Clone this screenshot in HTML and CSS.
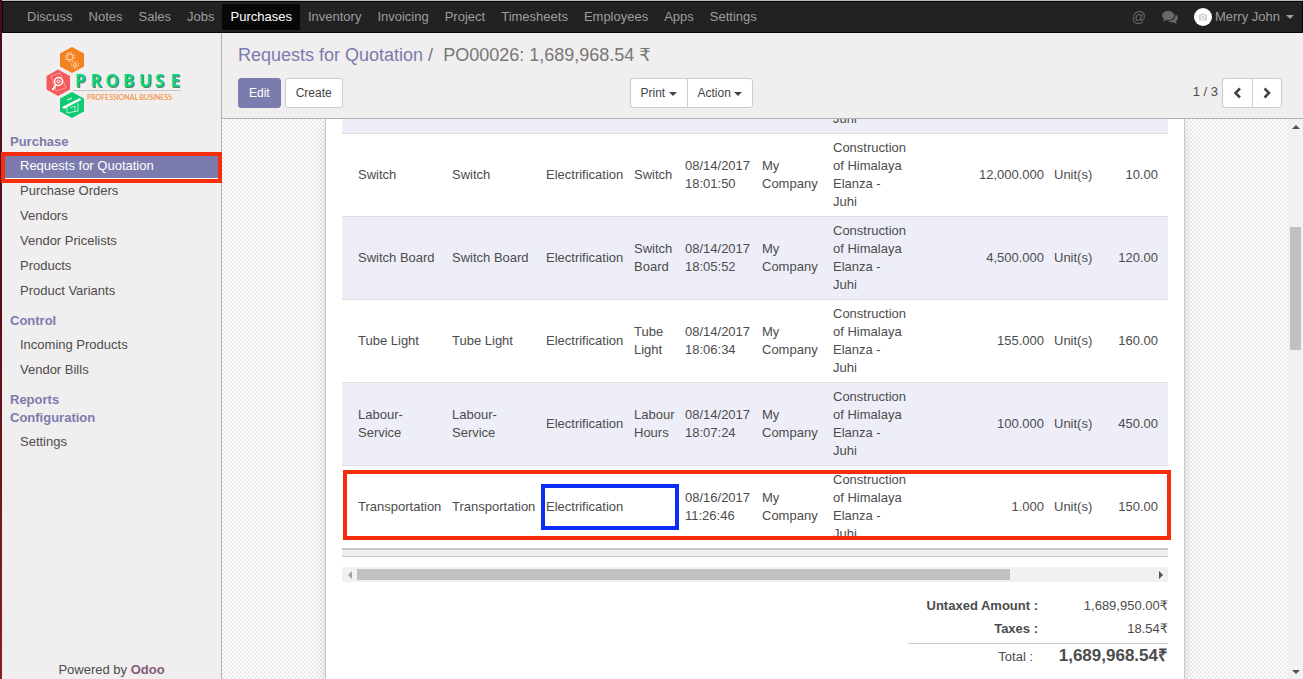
FILE: index.html
```html
<!DOCTYPE html>
<html lang="en">
<head>
<meta charset="utf-8">
<title>PO00026 - Odoo</title>
<link rel="stylesheet" href="styles.css">
</head>
<body>
<div class="desktop-edge"></div>
<div class="app">
  <nav class="topbar">
    <ul class="menu">
      <li><a href="#">Discuss</a></li>
      <li><a href="#">Notes</a></li>
      <li><a href="#">Sales</a></li>
      <li><a href="#">Jobs</a></li>
      <li><a href="#" class="active">Purchases</a></li>
      <li><a href="#">Inventory</a></li>
      <li><a href="#">Invoicing</a></li>
      <li><a href="#">Project</a></li>
      <li><a href="#">Timesheets</a></li>
      <li><a href="#">Employees</a></li>
      <li><a href="#">Apps</a></li>
      <li><a href="#">Settings</a></li>
    </ul>
    <div class="systray">
      <a href="#" class="tray-icon" aria-label="Mentions">@</a>
      <a href="#" class="tray-icon" aria-label="Messages">
        <svg width="16" height="13" viewBox="0 0 16 13" fill="currentColor"><path d="M6.200 0C9.600 0 12.300 2 12.300 4.600S9.600 9.100 6.200 9.100c-.6 0-1.200 0-1.700-.2C3.500 9.700 2.200 10.200.9 10.400c.7-.7 1.200-1.400 1.300-2.300C.9 7.200 0 6 0 4.600 0 2 2.800 0 6.200 0z"/><path d="M13.200 3.300C14.900 4.100 16 5.400 16 6.900c0 1.400-.8 2.600-2.200 3.400.1.900.6 1.700 1.300 2.400-1.400-.2-2.600-.7-3.600-1.500-2.200.4-4.400 0-5.900-1.100 4.300 0 7.800-2.300 7.800-5.500 0-.5 0-.9-.2-1.300z"/></svg>
      </a>
      <a href="#" class="user">
        <svg width="18" height="18" viewBox="0 0 18 18"><circle cx="9" cy="9" r="9" fill="#fff"/><path d="M5 6.500h2l.8-.9h2.400l.8.9h2v6H5z" fill="#cfcfcf"/><circle cx="9" cy="9.300" r="2" fill="none" stroke="#fff"/></svg>
        <span>Merry John</span>
        <i class="caret"></i>
      </a>
    </div>
  </nav>
  <div class="main">
    <aside class="sidebar">
      <a href="#" class="logo" aria-label="Probuse Professional Business">
        <svg width="160" height="85" viewBox="0 0 160 85">
          <path d="M42 7l12 6.500v13L42 33l-12-6.500v-13z" fill="#f58220"/>
          <path d="M28 29.500l12 6.500v13.500L28 56l-11.500-6.500V36z" fill="#f55a5a"/>
          <path d="M42 52l12 6.500v13L42 78l-12-6.500v-13z" fill="#0dcb73"/>
          <g fill="none" stroke="#fde3cc">
            <circle cx="40" cy="17" r="3"/><circle cx="40" cy="17" r="4.500" stroke-dasharray="1.800 1.730"/>
            <circle cx="45" cy="25" r="1.500"/><circle cx="45" cy="25" r="3.500" stroke-dasharray="1.400 1.340"/>
          </g>
          <path d="M21 36l9-3 6 15-10 3z" fill="none" stroke="#fa9c9c"/>
          <circle cx="28.500" cy="41.500" r="4" fill="#f55a5a" stroke="#fff" stroke-width="1.500"/>
          <path d="M26 45l-3.500 5" stroke="#fff" stroke-width="2"/><circle cx="28.500" cy="41.500" r="1.500" fill="none" stroke="#fff"/>
          <path d="M37 65v8l11-2V63M40 68l5-2v6" fill="none" stroke="#b6f0d3"/>
          <path d="M32 67l18-9 1 2-17 9z" fill="#fff"/>
          <path d="M37 60l5-2" stroke="#fff"/>
          <text class="logo-name" x="45 60.500 75.500 93 109 125 140.500" y="47">PROBUSE</text>
          <path d="M43 50.500h108" stroke="#c9c5c7"/>
          <text class="logo-tag" x="57" y="60">PROFESSIONAL BUSINESS</text>
        </svg>
      </a>
      <div class="sections">
        <h2>Purchase</h2>
        <ul>
          <li class="selected"><a href="#">Requests for Quotation</a></li>
          <li><a href="#">Purchase Orders</a></li>
          <li><a href="#">Vendors</a></li>
          <li><a href="#">Vendor Pricelists</a></li>
          <li><a href="#">Products</a></li>
          <li><a href="#">Product Variants</a></li>
        </ul>
        <h2>Control</h2>
        <ul>
          <li><a href="#">Incoming Products</a></li>
          <li><a href="#">Vendor Bills</a></li>
        </ul>
        <h2>Reports</h2>
        <h2>Configuration</h2>
        <ul>
          <li><a href="#">Settings</a></li>
        </ul>
      </div>
      <footer class="powered">Powered by <a href="#">Odoo</a></footer>
    </aside>
    <div class="content">
      <header class="control-panel">
        <h1 class="breadcrumb"><a href="#">Requests for Quotation</a><span class="slash">/</span><span>PO00026: 1,689,968.54 <span class="cur">₹</span></span></h1>
        <div class="toolbar">
          <div class="tools-left">
            <button class="btn primary">Edit</button>
            <button class="btn">Create</button>
          </div>
          <div class="tools-right">
            <div class="group">
              <button class="btn">Print <i class="caret"></i></button>
              <button class="btn">Action <i class="caret"></i></button>
            </div>
            <div class="pager">
              <span>1 / 3</span>
              <div class="group">
                <button class="btn" aria-label="Previous"><svg width="10" height="12" viewBox="0 0 10 12"><path d="M8 1.500L3.500 6 8 10.500" fill="none" stroke="#444" stroke-width="2.600"/></svg></button>
                <button class="btn" aria-label="Next"><svg width="10" height="12" viewBox="0 0 10 12"><path d="M2.500 1.500L7 6 2.500 10.500" fill="none" stroke="#444" stroke-width="2.600"/></svg></button>
              </div>
            </div>
          </div>
        </div>
      </header>
      <div class="viewport">
        <div class="canvas">
          <section class="sheet">
            <div class="lines">
              <table>
                <colgroup><col class="c-product"><col class="c-desc"><col class="c-account"><col class="c-tag"><col class="c-date"><col class="c-company"><col class="c-project"><col><col class="c-unit"><col class="c-price"></colgroup>
                <tbody>
                  <tr><td></td><td></td><td></td><td></td><td></td><td></td><td>Juhi</td><td></td><td></td><td></td></tr>
                  <tr><td>Switch</td><td>Switch</td><td>Electrification</td><td>Switch</td><td>08/14/2017 18:01:50</td><td>My Company</td><td>Construction<br>of Himalaya<br>Elanza -<br>Juhi</td><td class="num">12,000.000</td><td>Unit(s)</td><td class="num">10.00</td></tr>
                  <tr><td>Switch Board</td><td>Switch Board</td><td>Electrification</td><td>Switch Board</td><td>08/14/2017 18:05:52</td><td>My Company</td><td>Construction<br>of Himalaya<br>Elanza -<br>Juhi</td><td class="num">4,500.000</td><td>Unit(s)</td><td class="num">120.00</td></tr>
                  <tr><td>Tube Light</td><td>Tube Light</td><td>Electrification</td><td>Tube Light</td><td>08/14/2017 18:06:34</td><td>My Company</td><td>Construction<br>of Himalaya<br>Elanza -<br>Juhi</td><td class="num">155.000</td><td>Unit(s)</td><td class="num">160.00</td></tr>
                  <tr><td>Labour-<br>Service</td><td>Labour-<br>Service</td><td>Electrification</td><td>Labour Hours</td><td>08/14/2017 18:07:24</td><td>My Company</td><td>Construction<br>of Himalaya<br>Elanza -<br>Juhi</td><td class="num">100.000</td><td>Unit(s)</td><td class="num">450.00</td></tr>
                  <tr><td>Transportation</td><td>Transportation</td><td>Electrification</td><td></td><td>08/16/2017 11:26:46</td><td>My Company</td><td>Construction<br>of Himalaya<br>Elanza -<br>Juhi</td><td class="num">1.000</td><td>Unit(s)</td><td class="num">150.00</td></tr>
                </tbody>
              </table>
              <div class="mark mark-row"></div>
              <div class="mark mark-cell"></div>
            </div>
            <div class="table-foot"></div>
            <div class="hscroll"><i class="arrow left"></i><div class="track"><div class="thumb"></div></div><i class="arrow right"></i></div>
            <dl class="totals">
              <div><dt>Untaxed Amount :</dt><dd>1,689,950.00<span class="cur">₹</span></dd></div>
              <div><dt>Taxes :</dt><dd>18.54<span class="cur">₹</span></dd></div>
              <div class="grand"><dt>Total :</dt><dd>1,689,968.54₹</dd></div>
            </dl>
          </section>
        </div>
        <div class="vscroll"><i class="arrow up"></i><div class="track"><div class="thumb"></div></div><i class="arrow down"></i></div>
      </div>
    </div>
  </div>
</div>
</body>
</html>
```

FILE: styles.css
```css
* { box-sizing: border-box; }
body {
  margin: 0;
  height: 100vh;
  display: flex;
  overflow: hidden;
  font: 13px/18px "Liberation Sans", Arial, sans-serif;
  color: #4c4c4c;
  background: #f0eeee;
}
a { color: inherit; text-decoration: none; }
ul { list-style: none; margin: 0; padding: 0; }
h1, h2, dl, dd { margin: 0; }
.cur { font-family: "DejaVu Sans", sans-serif; line-height: 1; }

.desktop-edge {
  flex: none;
  width: 2px;
  background: linear-gradient(#4a0d18, #5c1019 50%, #8c1c1c);
}
.app { flex: 1; min-width: 0; display: flex; flex-direction: column; border-top: 1px solid #b8bab8; }

.topbar {
  flex: none;
  height: 32px;
  display: flex;
  justify-content: space-between;
  background: #222;
  border: 1px solid #060606;
  color: #9d9d9d;
}
.menu { display: flex; padding-left: 16px; }
.menu a { display: block; padding: 6px 8px; }
.menu .active { background: #080808; color: #fff; margin-top: 2px; padding: 4px 8px; }
.systray { display: flex; align-items: center; gap: 16px; padding-right: 8px; }
.tray-icon { display: flex; color: #686868; font-size: 14px; }
.user { display: flex; align-items: center; gap: 3px; }
.caret {
  display: inline-block;
  border: 4px solid transparent;
  border-top-color: currentColor;
  border-bottom: 0;
  vertical-align: middle;
}
.user .caret { margin-left: 3px; }

.main { flex: 1; min-height: 0; display: flex; }
.sidebar {
  flex: none;
  width: 220px;
  display: flex;
  flex-direction: column;
  border-right: 1px solid #afafb6;
}
.logo { display: block; padding: 7px 28px 0; height: 100px; }
.logo svg { display: block; }
.logo-name { font: bold 17px "Open Sans", sans-serif; fill: #0fd67c; text-shadow: 1px 1px #5e7a6c; }
.logo-tag { font: 7px Lato, sans-serif; fill: #f58220; }
.sections { flex: 1; }
.sections h2 { font-size: 13px; line-height: 18px; color: #7c7bad; padding-left: 8px; }
.sections ul { padding: 3px 0 8px; }
.sections li { height: 25px; padding: 3px 18px 4px; }
.sections .selected {
  position: relative;
  background: #7c7bad;
  color: #fff;
  border-bottom: 1px solid #fff;
}
.selected::after {
  content: "";
  position: absolute;
  inset: -2px -1px -5px -1px;
  border: 4px solid #f62e0b;
}
.powered { text-align: center; }
.powered a { font-weight: bold; color: #875a7b; }

.content { flex: 1; min-width: 0; display: flex; flex-direction: column; }
.control-panel { flex: none; height: 86px; padding: 10px 21px 0 16px; border-bottom: 1px solid #afafb6; }
.breadcrumb { font-size: 18px; line-height: 24px; font-weight: normal; color: #777; }
.breadcrumb a { color: #7c7bad; }
.slash { margin: 0 10px 0 5px; }
.toolbar { display: flex; margin-top: 11px; }
.tools-left { width: 37.5%; display: flex; gap: 4px; }
.tools-right { flex: 1; display: flex; justify-content: space-between; }
.btn {
  height: 30px;
  padding: 0 10px;
  font: 12px/18px "Liberation Sans", Arial, sans-serif;
  color: #444;
  background: #fff;
  border: 1px solid #ccc;
  border-radius: 3px;
}
.btn.primary { background: #7c7bad; border-color: #7c7bad; color: #fff; }
.group { display: flex; }
.group .btn:first-child { border-radius: 3px 0 0 3px; border-right: 0; }
.group .btn:last-child { border-radius: 0 3px 3px 0; }
.pager { display: flex; gap: 4px; }
.pager span { padding-top: 5px; }
.pager .btn { width: 30px; padding: 0 9px; }
.pager svg { display: block; }

.viewport { flex: 1; min-height: 0; display: flex; }
.canvas {
  flex: 1;
  overflow: hidden;
  background: repeating-conic-gradient(#ebebeb 0 25%, #fff 0 50%) 0 0 / 4px 4px;
}
.sheet {
  max-width: 860px;
  min-height: 120%;
  margin: -14px auto 0;
  padding: 0 16px;
  background: #fff;
  border: 1px solid #c8c8d3;
  border-width: 0 1px;
  box-shadow: 0 5px 20px -15px #000;
}
.lines { position: relative; }
table { width: 100%; table-layout: fixed; border-collapse: separate; border-spacing: 0; }
td { padding: 5px; border-bottom: 1px solid #ddd; vertical-align: middle; }
td:first-child { padding-left: 16px; }
td:last-child { padding-right: 10px; }
tr:last-child td { border-bottom: 0; }
tr:nth-child(odd) { background: #eeeef8; }
tr:nth-child(even) { background: #fff; }
.num { text-align: right; }
.c-product { width: 105px; }
.c-desc { width: 94px; }
.c-account { width: 88px; }
.c-tag { width: 51px; }
.c-date { width: 77px; }
.c-company { width: 71px; }
.c-project { width: 95px; }
.c-unit { width: 48px; }
.c-price { width: 71px; }
.mark { position: absolute; border: 4px solid #f62e0b; }
.mark-row { left: 1px; right: -3px; bottom: 8px; height: 70px; }
.mark-cell { left: 199px; width: 138px; bottom: 18px; height: 46px; border-color: #0a2ef5; }
.table-foot { height: 9px; background: #eee; border-top: 2px solid #c8c8c8; border-bottom: 1px solid #c8c8c8; }

.hscroll { display: flex; align-items: center; height: 15px; margin: 10px 0 15px; background: #f1f1f1; }
.hscroll .track { flex: 1; }
.hscroll .thumb { width: 82%; height: 11px; background: #c1c1c1; }
.vscroll { flex: none; width: 15px; display: flex; flex-direction: column; align-items: center; background: #f1f1f1; }
.vscroll .track { flex: 1; display: flex; flex-direction: column; padding-top: 93px; }
.vscroll .thumb { width: 11px; height: 123px; background: #c1c1c1; }
.arrow { flex: none; width: 15px; height: 15px; display: flex; align-items: center; justify-content: center; color: #505050; }
.arrow::before { content: ""; border: 4px solid transparent; }
.arrow.left { color: #a3a3a3; }
.arrow.left::before { border-right-color: currentColor; border-left: 0; }
.arrow.right::before { border-left-color: currentColor; border-right: 0; }
.arrow.up::before { border-bottom-color: currentColor; border-top: 0; }
.arrow.down::before { border-top-color: currentColor; border-bottom: 0; }

.totals { width: 260px; margin-left: auto; }
.totals div { display: flex; margin-bottom: 5px; }
.totals dt { width: 130px; text-align: right; font-weight: bold; }
.totals dd { flex: 1; text-align: right; }
.totals .grand { border-top: 1px solid #c8c8c8; padding-top: 4px; }
.totals .grand dt { font-weight: normal; padding-right: 5px; }
.totals .grand dd { font-size: 17px; line-height: 16px; font-weight: bold; }
```
